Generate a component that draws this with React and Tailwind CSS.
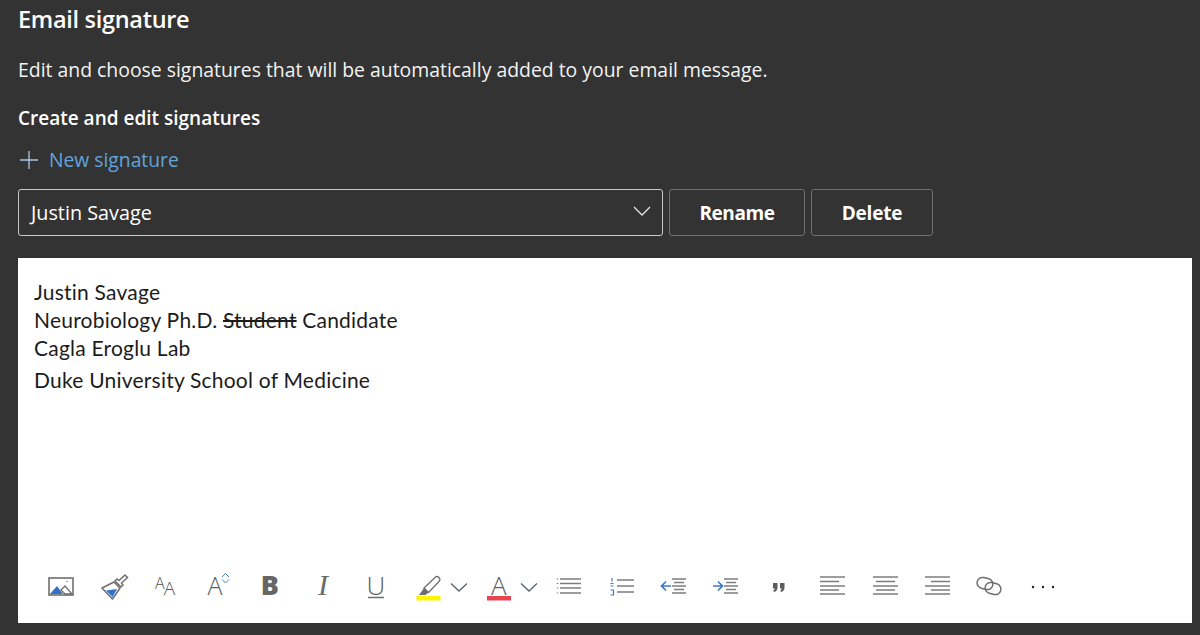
const G = "#6e6e6e";
const Ic = ({ className = "", w = 28, children }) => (
  <svg className={`shrink-0 overflow-visible ${className}`} width={w} height="28" viewBox={`0 0 ${w} 28`} fill="none">{children}</svg>
);
const Lines = ({ rows }) => rows.map(([a, b, y], i) => (
  <path key={i} d={`M${a} ${y}H${b}`} stroke="#7c7c7c" strokeWidth="1.5" />
));
const T = ({ x, y, size, weight = 400, style, fill = "#6a6a6a", family = "'Open Sans',sans-serif", children }) => (
  <text x={x} y={y} fontSize={size} fontWeight={weight} fontStyle={style} fill={fill} fontFamily={family} textAnchor="middle">{children}</text>
);
const Chev = ({ className }) => (
  <Ic className={className} w={18}><path d="M1 10.500l8 7.500 8-7.500" stroke="#56607a" strokeWidth="1.300" /></Ic>
);
const align = {
  left: [[1,26,4],[1,20,8.500],[1,26,13],[1,20,17],[1,26,21]],
  center: [[1,26,4],[4,23,8.500],[1,26,13],[4,23,17],[1,26,21]],
  right: [[1,26,4],[7,26,8.500],[1,26,13],[7,26,17],[1,26,21]],
};
const indentRows = [[13,27,6],[15,25,9.500],[13,27,13],[15,25,16.500],[13,27,20]];

function Toolbar() {
  return (
    <div className="mb-[22px] flex h-7 items-center pl-[29px]">
      <Ic>
        <rect x="2" y="5" width="24" height="17" stroke={G} strokeWidth="1.600" fill="#fff" />
        <path d="M3 21l7-8 6 8z" fill="#2f72c8" />
        <path d="M14 17l4-4 7 8h-7z" fill="#fff" stroke={G} strokeWidth="1.300" />
        <circle cx="20" cy="8.500" r=".7" fill={G} />
      </Ic>
      <Ic className="ml-[25px]">
        <path d="M25 2l2.500 2.500-6 5.500 1.500 2-2 2-6-6 2-2 2 1.500z" stroke={G} strokeWidth="1.500" fill="#fff" />
        <path d="M14 9l6 6-7.500 11L2 15z" stroke={G} strokeWidth="1.600" strokeLinejoin="round" fill="#fff" />
        <path d="M6 17.500l11-1.500-4.500 8z" fill="#2f72c8" />
      </Ic>
      <Ic className="ml-[23px]">
        <T x="9" y="16" size="16" weight="300" fill="#555">A</T>
        <T x="18.500" y="22" size="19" weight="300" fill="#555">A</T>
      </Ic>
      <Ic className="ml-[26px]">
        <T x="10" y="22" size="25" weight="300" fill="#5e5e5e">A</T>
        <path d="M17 4l3.500-3.500L24 4M17 6.500l3.500 3.500L24 6.500" stroke="#4a7fc8" strokeWidth="1" />
      </Ic>
      <Ic className="ml-[23px]">
        <T x="14" y="22" size="27" weight="800" fill="#666">B</T>
      </Ic>
      <Ic className="ml-[24px]">
        <T x="15" y="22" size="30" style="italic" family="'Liberation Serif',serif">I</T>
      </Ic>
      <Ic className="ml-[26px]">
        <T x="14" y="22" size="26" weight="300" fill="#5e5e5e">U</T>
        <path d="M6 24.500h16" stroke={G} strokeWidth="1.500" />
      </Ic>
      <Ic className="ml-[24px]">
        <path d="M10 15L21 4.500c2.500-2.500 6.500 1 4 4L14.500 19.500z" stroke={G} strokeWidth="1.300" fill="#fff" />
        <path d="M10 15l4.500 4.500-3 2.500H5z" fill={G} />
        <rect x="2.500" y="23" width="24" height="4.500" fill="#fdf400" />
      </Ic>
      <Chev className="ml-[8px]" />
      <Ic className="ml-[17px]">
        <T x="14" y="22" size="26" weight="300" fill="#5e5e5e">A</T>
        <rect x="2" y="23" width="24" height="4.500" fill="#ea4350" />
      </Ic>
      <Chev className="ml-[7px]" />
      <Ic className="ml-[18px]">
        <path d="M1.500 5.500v1M1.500 10v1M1.500 14.500v1M1.500 19.500v1" stroke="#4a7fc8" strokeWidth="1.500" />
        <Lines rows={[[4,25,6],[4,25,10.500],[4,25,15],[4,25,20]]} />
      </Ic>
      <Ic className="ml-[25px]">
        <path d="M3 5v3.500M1.500 10.500h3M1.500 13h3M1.500 17h3v5h-3" stroke="#3f78c8" strokeWidth="1.200" />
        <Lines rows={[[8,25,7],[8,25,13],[8,25,19]]} />
      </Ic>
      <Ic className="ml-[22px]">
        <path d="M12 13H3M7 8.500L2.500 13 7 17.500" stroke="#3f78c8" strokeWidth="1.700" />
        <Lines rows={indentRows} />
      </Ic>
      <Ic className="ml-[24px]">
        <path d="M2 13h9M7 8.500l4.500 4.500L7 17.500" stroke="#3f78c8" strokeWidth="1.700" />
        <Lines rows={indentRows} />
      </Ic>
      <Ic className="ml-[25px]">
        <path d="M9 10h4.500v4.500c0 2.500-1.500 4-3.500 4.500l-.7-1.500c1-.5 1.500-1.200 1.500-2H9zM16 10h4.500v4.500c0 2.500-1.500 4-3.500 4.500l-.7-1.500c1-.5 1.500-1.200 1.500-2H16z" fill="#5c5c5c" />
      </Ic>
      <Ic className="ml-[27px]"><Lines rows={align.left} /></Ic>
      <Ic className="ml-[25px]"><Lines rows={align.center} /></Ic>
      <Ic className="ml-[24px]"><Lines rows={align.right} /></Ic>
      <Ic className="ml-[23px]">
        <rect x="2" y="5" width="16" height="11" rx="5.500" stroke={G} strokeWidth="1.500" transform="rotate(14 10 10.500)" />
        <rect x="10" y="10" width="16" height="11" rx="5.500" stroke={G} strokeWidth="1.500" transform="rotate(14 18 15.500)" />
      </Ic>
      <Ic className="ml-[25px]">
        <circle cx="5" cy="14" r="1.200" fill="#222" /><circle cx="15" cy="14" r="1.200" fill="#222" /><circle cx="25" cy="14" r="1.200" fill="#222" />
      </Ic>
    </div>
  );
}

export default function App() {
  return (
    <div className="flex h-[635px] w-[1200px] flex-col overflow-hidden bg-[#333333] pb-3 pl-[18px] pr-2 font-['Open_Sans','Noto_Sans',sans-serif] text-white">
      <h1 className="mt-[4px] h-[30px] text-[23.5px] leading-[30px] font-semibold tracking-[-0.3px]">Email signature</h1>
      <p className="mt-[21px] h-[30px] text-[19.4px] leading-[30px] text-[#f2f2f2]">Edit and choose signatures that will be automatically added to your email message.</p>
      <h2 className="mt-[19px] h-[28px] text-[19px] leading-[28px] font-semibold">Create and edit signatures</h2>
      <div className="mt-[14px] flex h-7 items-center text-[19.3px] text-[#62a4da]">
        <svg className="ml-px" width="20" height="20" viewBox="0 0 20 20" fill="none"><path d="M10 1v18M1 10h18" stroke="#a9c9e6" strokeWidth="1.300" /></svg>
        <span className="ml-2.5">New signature</span>
      </div>
      <div className="mt-[15px] flex h-[47px] gap-[6px]">
        <div className="flex w-[645px] items-center justify-between rounded-[3px] border border-[#c8c8c8] pl-3 pr-[11px] text-[19.800px]">
          <span>Justin Savage</span>
          <svg width="18" height="10" viewBox="0 0 18 10" fill="none" className="mb-1"><path d="M1 1l8 8 8-8" stroke="#e4e4e4" strokeWidth="1.300" /></svg>
        </div>
        <button className="w-[136px] rounded-[3px] border border-[#707070] pt-0.5 text-[19px] font-bold tracking-[-0.4px]">Rename</button>
        <button className="w-[122px] rounded-[3px] border border-[#707070] pt-0.5 text-[19px] font-bold tracking-[-0.2px]">Delete</button>
      </div>
      <div className="mt-[22px] flex flex-1 flex-col bg-white pl-4 pt-5 font-['Lato',sans-serif] text-[21px] tracking-[0.22px] text-[#1c1c1c]">
        <p className="h-7 leading-7">Justin Savage</p>
        <p className="h-7 leading-7">Neurobiology Ph.D. <s>Student</s> Candidate</p>
        <p className="h-7 leading-7">Cagla Eroglu Lab</p>
        <p className="mt-1 h-7 leading-7">Duke University School of Medicine</p>
        <div className="-ml-4 mt-auto"><Toolbar /></div>
      </div>
    </div>
  );
}
